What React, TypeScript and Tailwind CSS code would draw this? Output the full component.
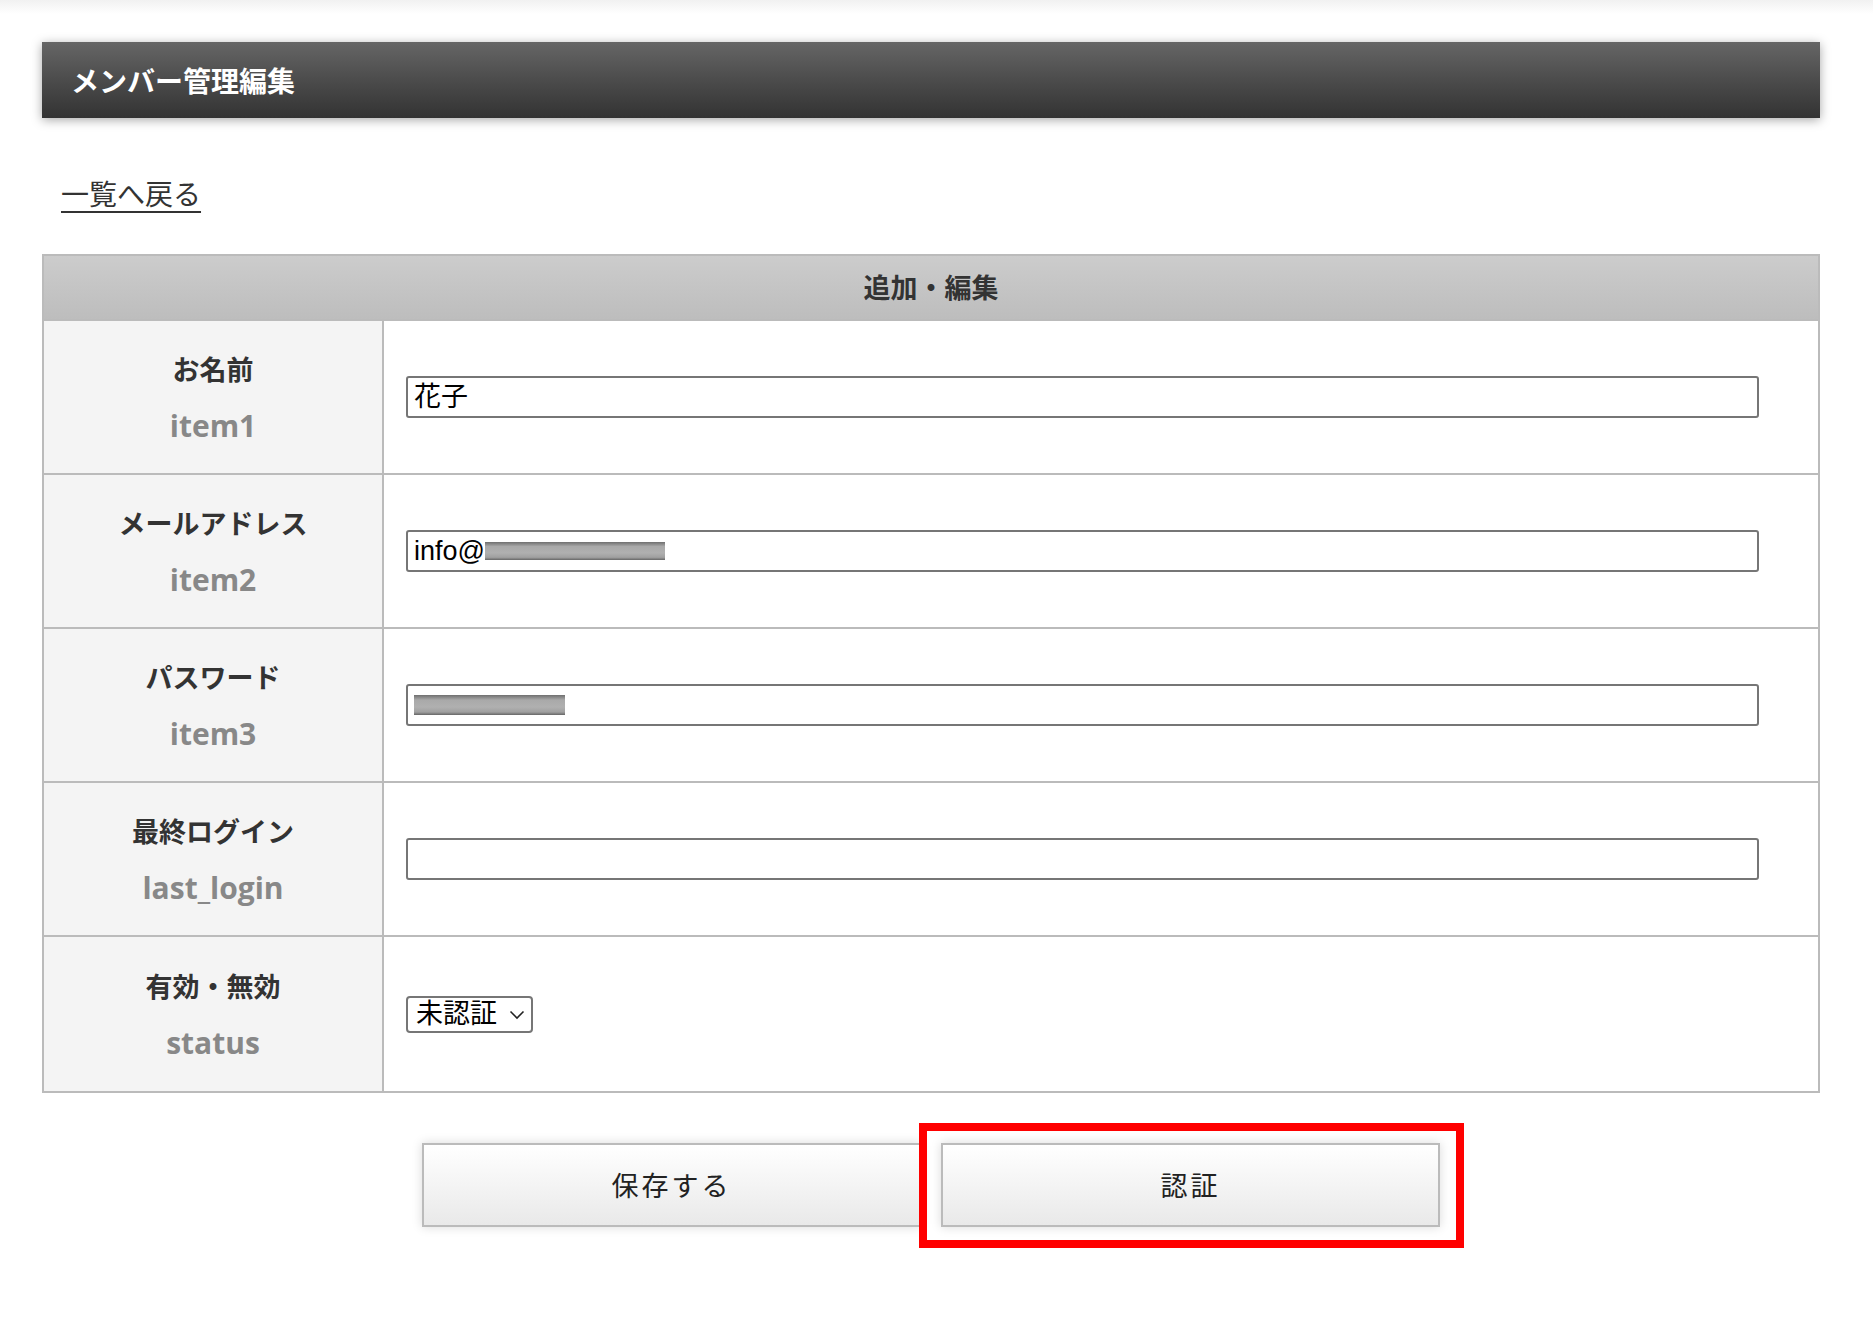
import React from 'react';

const rows = [
  { label: 'お名前', key: 'item1', type: 'name' },
  { label: 'メールアドレス', key: 'item2', type: 'email' },
  { label: 'パスワード', key: 'item3', type: 'password' },
  { label: '最終ログイン', key: 'last_login', type: 'empty' },
  { label: '有効・無効', key: 'status', type: 'select' },
];

const Blur = ({ w, h }: { w: number; h: number }) => (
  <span
    className="inline-block bg-[linear-gradient(to_bottom,#6f6f6f_0%,#a9a9a9_25%,#b0b0b0_60%,#a0a0a0_85%,#666_100%)]"
    style={{ width: w, height: h }}
  />
);

const FieldInput = ({ type }: { type: string }) => {
  if (type === 'select') {
    return (
      <div className="relative w-[127px]">
        <select className="w-[127px] h-[37px] appearance-none border-2 border-[#767676] rounded-[4px] bg-white pl-[8px] text-[27px] leading-[33px] text-black font-['Liberation_Sans','Noto_Sans_CJK_JP',sans-serif]">
          <option>未認証</option>
          <option>認証済</option>
        </select>
        <svg className="absolute right-[8px] top-[14px] pointer-events-none" width="16" height="10" viewBox="0 0 16 10">
          <path d="M1.5 1.5 L8 8 L14.5 1.5" fill="none" stroke="#222" strokeWidth="1.6" />
        </svg>
      </div>
    );
  }
  return (
    <div className="w-[1353px] h-[42px] border-2 border-[#767676] rounded-[3px] bg-white flex items-center pl-[6px] text-[27px] text-black font-['Liberation_Sans','Noto_Sans_CJK_JP',sans-serif]">
      {type === 'name' && <span>花子</span>}
      {type === 'email' && (
        <>
          <span>info@</span>
          <Blur w={180} h={18} />
        </>
      )}
      {type === 'password' && <Blur w={151} h={20} />}
    </div>
  );
};

const App = () => {
  return (
    <div className="min-h-screen bg-white font-['Noto_Sans_CJK_JP',sans-serif]">
      <div className="h-[14px] bg-gradient-to-b from-[#f1f1f1] to-white" />
      <div className="ml-[42px] w-[1778px] pt-[28px] pb-[80px]">
        <div className="h-[76px] flex items-center pl-[29px] bg-gradient-to-b from-[#666666] to-[#333333] shadow-[0_2px_10px_rgba(0,0,0,0.35)]">
          <h1 className="text-white text-[28px] font-bold">メンバー管理編集</h1>
        </div>

        <div className="mt-[55px] h-[40px] leading-[40px] pl-[19px]">
          <a href="#" className="text-[28px] text-[#333] underline underline-offset-[6px] decoration-[2px]">
            一覧へ戻る
          </a>
        </div>

        <div className="mt-[41px] border-2 border-[#bbbbbb]">
          <div className="h-[65px] border-b-2 border-[#bbbbbb] bg-gradient-to-b from-[#cccccc] to-[#bdbdbd] flex items-center justify-center">
            <span className="text-[27px] font-bold text-[#333]">追加・編集</span>
          </div>
          {rows.map((row, i) => (
            <div
              key={row.key}
              className={`grid grid-cols-[340px_1fr] h-[154px] ${i < rows.length - 1 ? 'border-b-2 border-[#bbbbbb]' : ''}`}
            >
              <div className="bg-[#f4f4f4] border-r-2 border-[#bbbbbb] flex flex-col items-center justify-center gap-[17px]">
                <span className="text-[27px] leading-[40px] font-bold text-[#333]">{row.label}</span>
                <span className="text-[30px] leading-[40px] font-bold text-[#888] font-['Open_Sans','Noto_Sans_CJK_JP',sans-serif]">
                  {row.key}
                </span>
              </div>
              <div className="flex items-center pl-[22px]">
                <FieldInput type={row.type} />
              </div>
            </div>
          ))}
        </div>

        <div className="mt-[50px] flex justify-center gap-[20px]">
          <button className="w-[499px] h-[84px] border-2 border-[#bbbbbb] bg-gradient-to-b from-white to-[#e9e9e9] shadow-[0_0_10px_rgba(0,0,0,0.15)] text-[27px] tracking-[3px] text-[#222]">
            保存する
          </button>
          <div className="relative">
            <button className="w-[499px] h-[84px] border-2 border-[#bbbbbb] bg-gradient-to-b from-white to-[#e9e9e9] shadow-[0_0_10px_rgba(0,0,0,0.15)] text-[27px] tracking-[3px] text-[#222]">
              認証
            </button>
            <div className="absolute -left-[22px] -right-[24px] -top-[20px] -bottom-[21px] border-[8px] border-[#ff0000] pointer-events-none" />
          </div>
        </div>
      </div>
    </div>
  );
};

export default App;
